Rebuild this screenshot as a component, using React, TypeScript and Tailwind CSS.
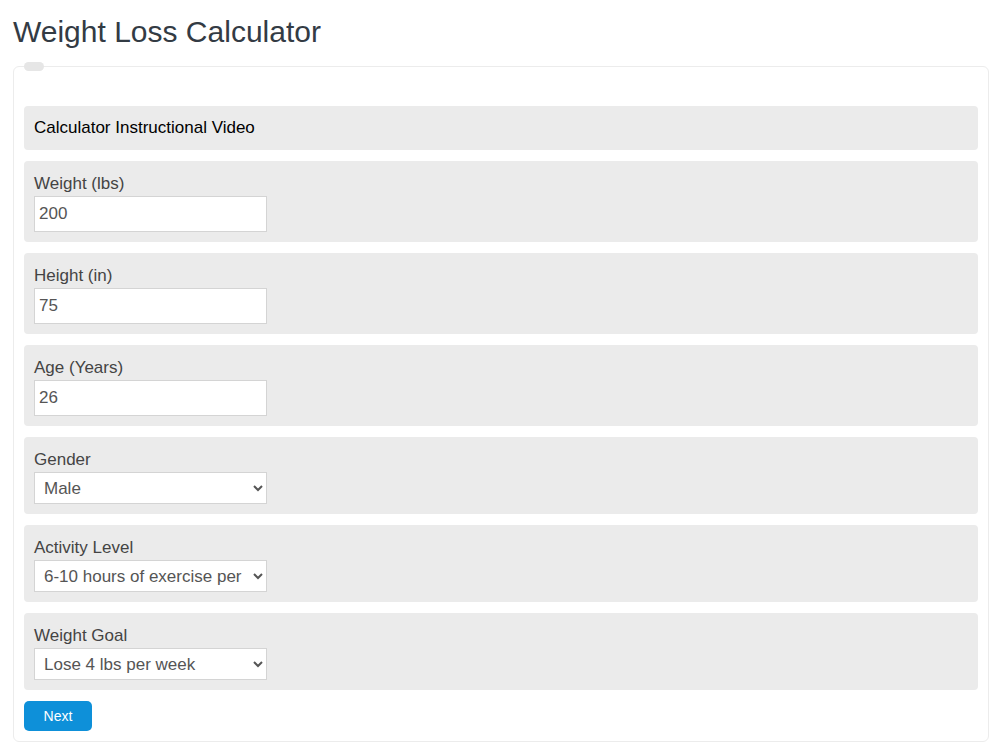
import { useState } from "react";

const inputs = [
	{ label: "Weight (lbs)", value: "200" },
	{ label: "Height (in)", value: "75" },
	{ label: "Age (Years)", value: "26" },
];

const selects = [
	{ label: "Gender", value: "Male", options: ["Male", "Female"] },
	{
		label: "Activity Level",
		value: "6-10 hours of exercise per week",
		options: [
			"Little to no exercise",
			"1-3 hours of exercise per week",
			"4-6 hours of exercise per week",
			"6-10 hours of exercise per week",
			"11+ hours of exercise per week",
		],
	},
	{
		label: "Weight Goal",
		value: "Lose 4 lbs per week",
		options: [
			"Lose 1 lbs per week",
			"Lose 2 lbs per week",
			"Lose 3 lbs per week",
			"Lose 4 lbs per week",
		],
	},
];

export default function App() {
	const [values, setValues] = useState<Record<string, string>>(() => {
		const init: Record<string, string> = {};
		[...inputs, ...selects].forEach((f) => (init[f.label] = f.value));
		return init;
	});

	const set = (k: string, v: string) => setValues((s) => ({ ...s, [k]: v }));

	return (
		<div className="min-h-[747px] bg-white px-[13px] pt-[14px] font-['Liberation_Sans',Arial,sans-serif]">
			<h1 className="text-[30px] leading-[36px] text-[#333b44]">
				Weight Loss Calculator
			</h1>
			<fieldset className="relative mt-[16px] w-[976px] border border-[#ececec] rounded-[6px] px-[10px] pt-[39px] pb-[10px]">
				{/* legend pill */}
				<div className="absolute left-[10px] top-[-5px] h-[9px] w-[20px] rounded-full bg-[#e6e6e6]" />
				<div className="flex flex-col gap-[11px]">
					<div className="rounded-[4px] bg-[#ebebeb] px-[10px] py-[10px] text-[17px] leading-[24px] text-black">
						Calculator Instructional Video
					</div>
					{inputs.map((f) => (
						<div key={f.label} className="rounded-[4px] bg-[#ebebeb] px-[10px] pt-[10px] pb-[10px]">
							<label className="block text-[17px] leading-[25px] text-[#444]">{f.label}</label>
							<input
								value={values[f.label]}
								onChange={(e) => set(f.label, e.target.value)}
								className="block h-[36px] w-[233px] border border-[#d4d4d4] bg-white px-[4px] text-[17px] text-[#555] outline-none"
							/>
						</div>
					))}
					{selects.map((f) => (
						<div key={f.label} className="rounded-[4px] bg-[#ebebeb] px-[10px] pt-[10px] pb-[10px]">
							<label className="block text-[17px] leading-[25px] text-[#444]">{f.label}</label>
							<select
								value={values[f.label]}
								onChange={(e) => set(f.label, e.target.value)}
								className="block h-[32px] w-[233px] border border-[#d4d4d4] bg-white pl-[5px] pr-[6px] text-[17px] text-[#555] outline-none"
							>
								{f.options.map((o) => (
									<option key={o}>{o}</option>
								))}
							</select>
						</div>
					))}
					<div>
						<button className="h-[30px] w-[68px] rounded-[5px] bg-[#0e90d9] text-[14px] text-white">
							Next
						</button>
					</div>
				</div>
			</fieldset>
		</div>
	);
}
